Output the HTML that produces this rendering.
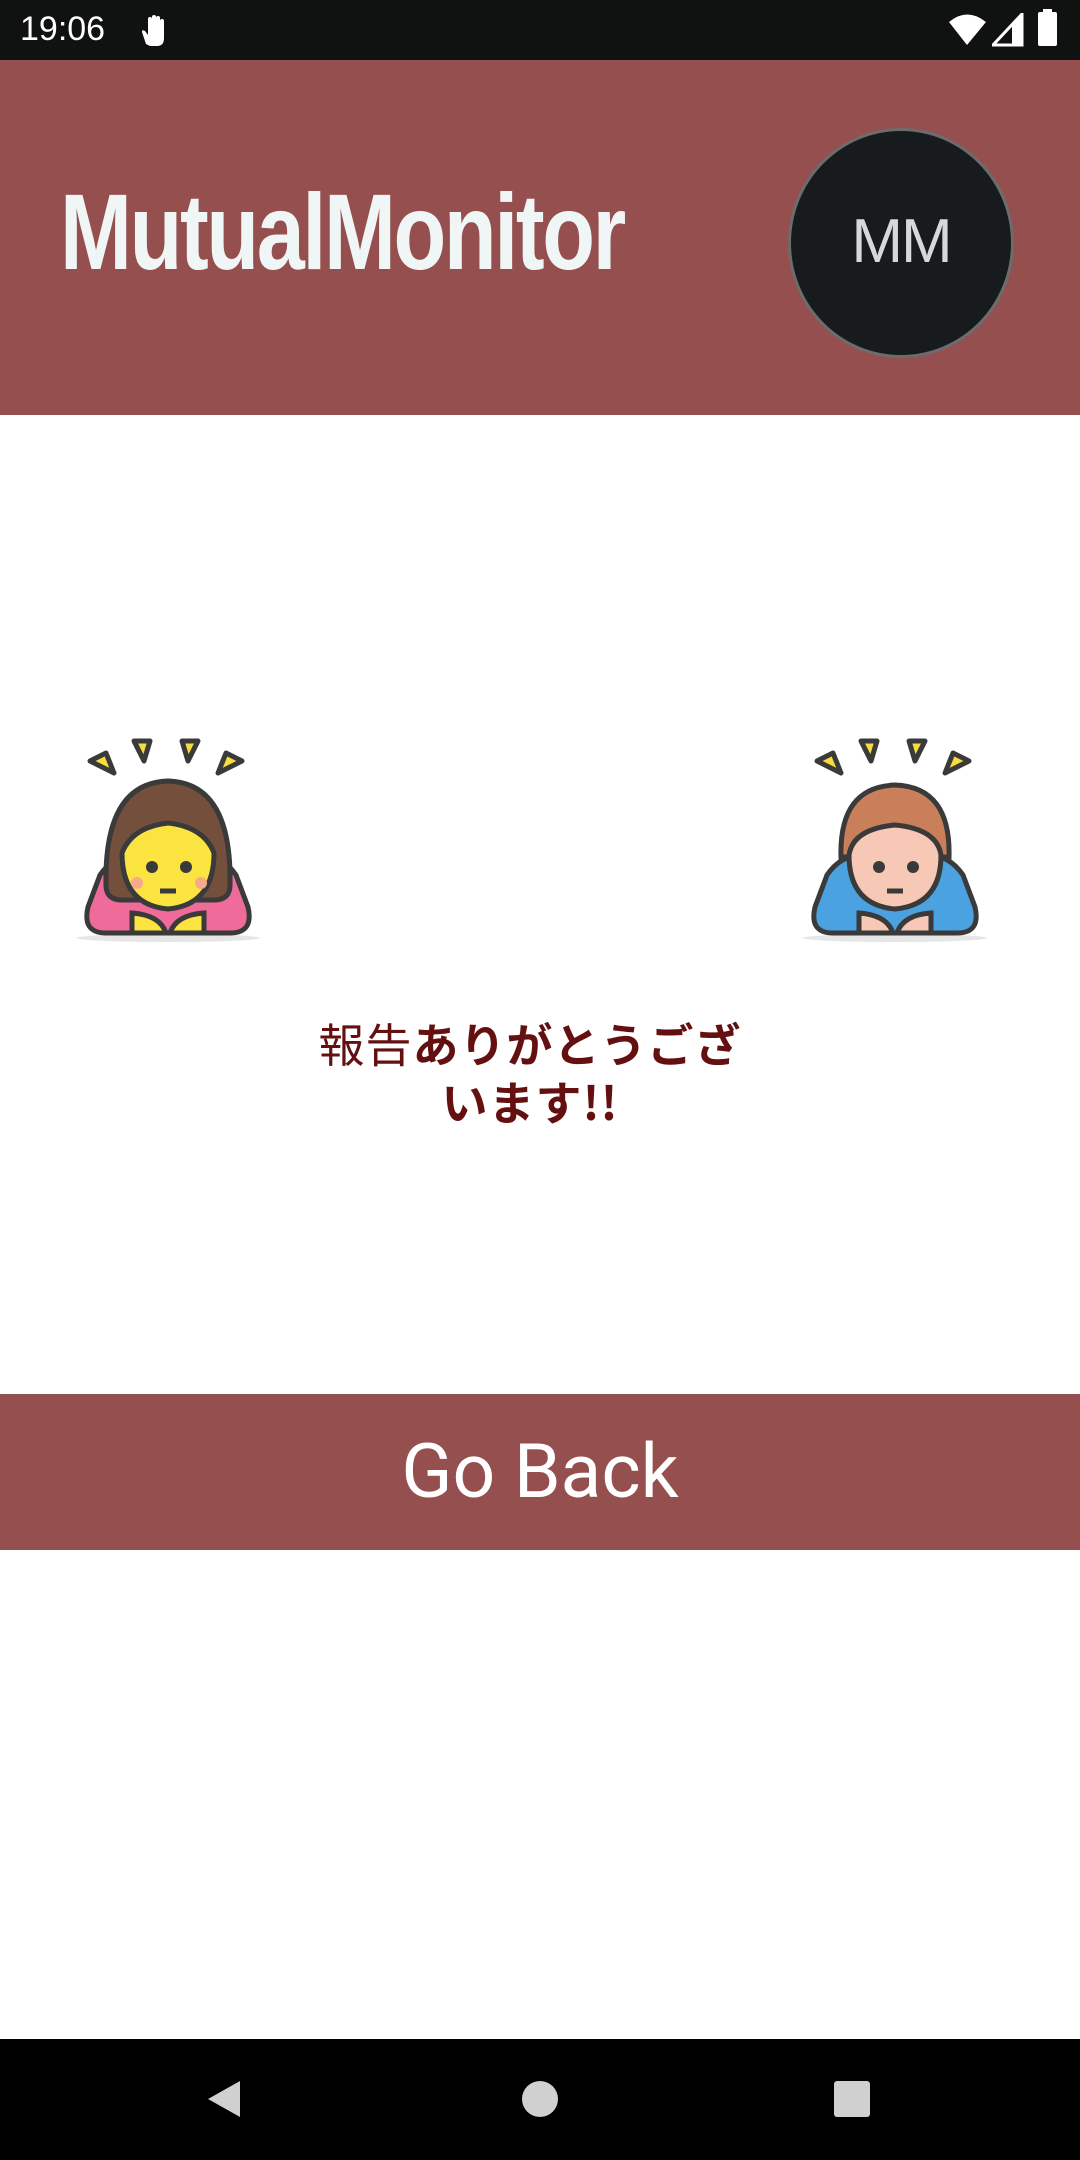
<!DOCTYPE html>
<html><head><meta charset="utf-8"><style>
html,body{margin:0;padding:0;width:1080px;height:2160px;background:#fff;overflow:hidden;position:relative;font-family:"Liberation Sans","Noto Sans CJK JP",sans-serif}
.sb{position:absolute;top:0;left:0;width:1080px;height:60px;background:#101211;color:#fff}
.hdr{position:absolute;top:60px;left:0;width:1080px;height:355px;background:#954f4f}
.title{position:absolute;left:60px;top:178px;font-size:108px;font-weight:bold;color:#f0f6f6;transform:scaleX(0.8);transform-origin:left top;letter-spacing:-3px;line-height:1}
.av{position:absolute;left:788px;top:128px;width:226px;height:230px;border-radius:50%;background:#181b1e;border:3px solid #6c6c6c;box-sizing:border-box;color:#d8d8d8;font-size:62px;text-align:center;line-height:222px;letter-spacing:-2px}
.msg{position:absolute;left:300px;top:1014px;width:460px;text-align:center;font-size:46px;font-weight:bold;color:#651010;line-height:58px;letter-spacing:1px;font-family:"Noto Sans CJK JP",sans-serif}
.btn{position:absolute;top:1394px;left:0;width:1080px;height:156px;background:#954f4f;color:#fff;font-size:75px;text-align:center;line-height:156px;font-family:"Roboto","Liberation Sans",sans-serif}
.nav{position:absolute;top:2039px;left:0;width:1080px;height:121px;background:#000}
</style></head><body>
<div class="sb">
<div style="position:absolute;left:20px;top:10px;font-size:34px;">19:06</div>
<svg style="position:absolute;left:140px;top:14px" width="30" height="34" viewBox="0 0 30 34"><path d="M6 30 L2 18 Q2 15 5 17 L8 21 V5 Q8 3 10 3 Q12 3 12 5 V15 V3 Q12 1 14 1 Q16 1 16 3 V15 V4 Q16 2 18 2 Q20 2 20 4 V16 V7 Q20 5 22 5 Q24 5 24 7 V24 Q24 32 17 32 H10 Z" fill="#fff"/></svg>
<svg style="position:absolute;left:948px;top:13px" width="40" height="34" viewBox="0 0 40 34"><path d="M1 9 Q19 -6 38 9 L19 32 Z" fill="#fff"/></svg>
<svg style="position:absolute;left:992px;top:13px" width="32" height="34" viewBox="0 0 32 34"><path d="M30 1 V32 H1 Z" fill="none" stroke="#fff" stroke-width="3"/><path d="M30 1 V32 H20 V12 Z" fill="#fff"/></svg>
<div style="position:absolute;left:1038px;top:12px;width:19px;height:34px;background:#fff;border-radius:2px"></div>
<div style="position:absolute;left:1043px;top:9px;width:9px;height:4px;background:#fff"></div>
</div>
<div class="hdr"></div>
<div class="title">MutualMonitor</div>
<div class="av">MM</div>

<svg style="position:absolute;left:70px;top:735px" width="196" height="210" viewBox="0 0 196 210">
<g stroke="#3a3a3a" stroke-width="5" stroke-linejoin="round" fill="#f6dc3c">
<path d="M20 26 L36 18 L44 38 Z"/><path d="M64 6 L80 6 L74 26 Z"/><path d="M112 6 L128 6 L118 26 Z"/><path d="M156 18 L172 26 L148 38 Z"/>
</g>
<ellipse cx="98" cy="203" rx="92" ry="4" fill="#e6e6e6"/>
<path d="M30 140 Q45 118 70 120 L126 120 Q151 118 166 140 L178 172 Q184 198 160 198 H36 Q12 198 18 172 Z" fill="#ee6b9a" stroke="#3a3a3a" stroke-width="5"/>
<path d="M36 150 Q34 48 98 46 Q162 48 160 150 Q160 165 144 165 H52 Q36 165 36 150 Z" fill="#744f3c" stroke="#3a3a3a" stroke-width="5"/>
<path d="M52 118 Q62 92 98 88 Q134 92 144 118 Q144 170 98 174 Q52 170 52 118 Z" fill="#fbe340" stroke="#3a3a3a" stroke-width="5"/>
<circle cx="82" cy="132" r="6" fill="#3a3a3a"/><circle cx="116" cy="132" r="6" fill="#3a3a3a"/>
<circle cx="67" cy="148" r="6" fill="#f7a98c"/><circle cx="131" cy="148" r="6" fill="#f7a98c"/>
<path d="M90 156 H106" stroke="#3a3a3a" stroke-width="5"/>
<path d="M62 178 Q90 180 96 198 H62 Z M134 178 Q106 180 100 198 H134 Z" fill="#fbe340" stroke="#3a3a3a" stroke-width="5"/>
</svg>

<svg style="position:absolute;left:797px;top:735px" width="196" height="210" viewBox="0 0 196 210">
<g stroke="#3a3a3a" stroke-width="5" stroke-linejoin="round" fill="#f6dc3c">
<path d="M20 26 L36 18 L44 38 Z"/><path d="M64 6 L80 6 L74 26 Z"/><path d="M112 6 L128 6 L118 26 Z"/><path d="M156 18 L172 26 L148 38 Z"/>
</g>
<ellipse cx="98" cy="203" rx="92" ry="4" fill="#e6e6e6"/>
<path d="M30 140 Q45 118 70 120 L126 120 Q151 118 166 140 L178 172 Q184 198 160 198 H36 Q12 198 18 172 Z" fill="#4aa3e0" stroke="#3a3a3a" stroke-width="5"/>
<path d="M44 122 Q42 52 98 50 Q154 52 152 122 Z" fill="#c9805a" stroke="#3a3a3a" stroke-width="5"/>
<path d="M52 120 Q56 94 98 90 Q140 94 144 120 Q144 170 98 174 Q52 170 52 120 Z" fill="#f7c8b5" stroke="#3a3a3a" stroke-width="5"/>
<circle cx="82" cy="132" r="6" fill="#3a3a3a"/><circle cx="116" cy="132" r="6" fill="#3a3a3a"/>
<path d="M90 156 H106" stroke="#3a3a3a" stroke-width="5"/>
<path d="M62 178 Q90 180 96 198 H62 Z M134 178 Q106 180 100 198 H134 Z" fill="#f7c8b5" stroke="#3a3a3a" stroke-width="5"/>
</svg>

<div class="msg"><span style="font-weight:normal">報告</span>ありがとうござ<br>います!!</div>
<div class="btn">Go Back</div>
<div class="nav">
<svg style="position:absolute;left:206px;top:40px" width="36" height="40" viewBox="0 0 36 40"><path d="M34 2 V38 L2 20 Z" fill="#d0d0d0"/></svg>
<div style="position:absolute;left:522px;top:42px;width:36px;height:36px;border-radius:50%;background:#d0d0d0"></div>
<div style="position:absolute;left:834px;top:42px;width:36px;height:36px;border-radius:3px;background:#d0d0d0"></div>
</div>
</body></html>
